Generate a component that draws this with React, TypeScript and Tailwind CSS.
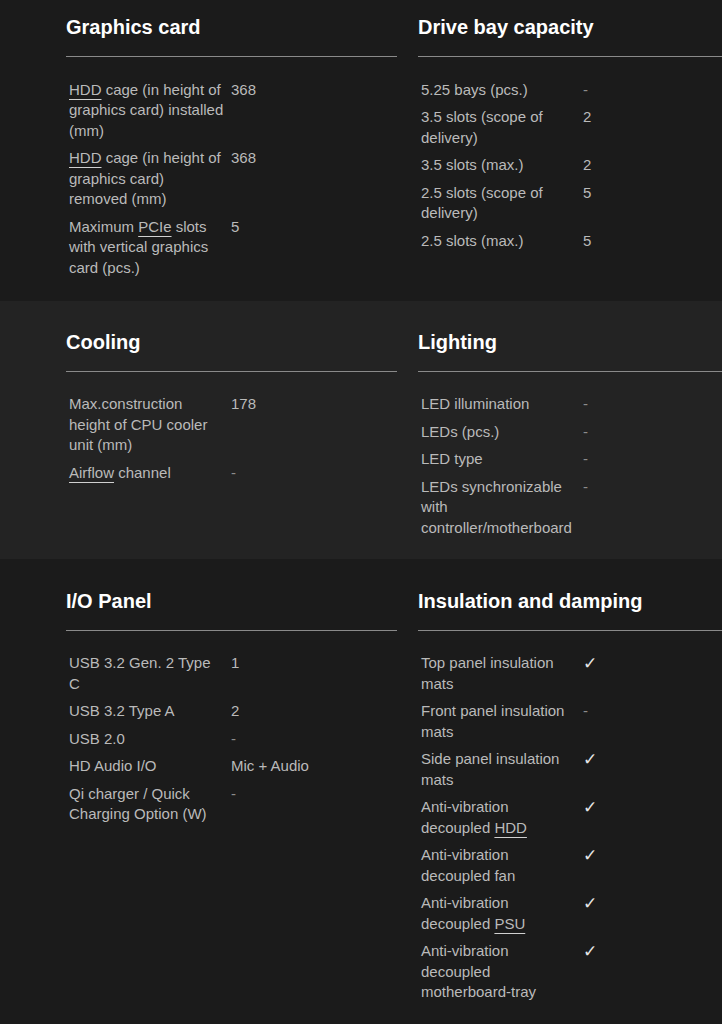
import React from 'react';

type Row = { label: React.ReactNode; value: React.ReactNode };

const U: React.FC<{ children: React.ReactNode }> = ({ children }) => (
  <span className="underline decoration-1 underline-offset-[4px] decoration-[#d0d0d0]">{children}</span>
);

const dash = <span className="text-[#8c8c8c]">-</span>;
const check = (
  <span className="text-[#e6e6e6] text-[17px]" style={{ fontFamily: '"DejaVu Sans", sans-serif' }}>
    ✓
  </span>
);

const SpecBlock: React.FC<{ title: string; rows: Row[] }> = ({ title, rows }) => (
  <div className="min-w-0">
    <h2 className="text-[20px] leading-6 font-bold text-white">{title}</h2>
    <div className="mt-[17px] h-px bg-[#8a8a8a]" />
    <div className="mt-[19px] pl-[3px]">
      {rows.map((r, i) => (
        <div key={i} className="grid grid-cols-[162px_1fr] py-[3.5px] text-[15px] leading-[20.5px] text-[#bababa]">
          <div className="pr-[7px]">{r.label}</div>
          <div>{r.value}</div>
        </div>
      ))}
    </div>
  </div>
);

const Section: React.FC<{ bg: string; pad: string; left: React.ReactNode; right: React.ReactNode }> = ({
  bg,
  pad,
  left,
  right,
}) => (
  <section className={`${bg} ${pad} pl-[66px]`}>
    <div className="grid grid-cols-[331px_1fr] gap-[21px]">
      {left}
      {right}
    </div>
  </section>
);

export default function App() {
  return (
    <div
      className="min-h-screen w-[722px] overflow-hidden bg-[#1b1b1b]"
      style={{ fontFamily: '"Liberation Sans", Arial, sans-serif' }}
    >
      <Section
        bg="bg-[#1b1b1b]"
        pad="pt-[15px] pb-[19px]"
        left={
          <SpecBlock
            title="Graphics card"
            rows={[
              { label: <><U>HDD</U> cage (in height of graphics card) installed (mm)</>, value: '368' },
              { label: <><U>HDD</U> cage (in height of graphics card) removed (mm)</>, value: '368' },
              { label: <>Maximum <U>PCIe</U> slots with vertical graphics card (pcs.)</>, value: '5' },
            ]}
          />
        }
        right={
          <SpecBlock
            title="Drive bay capacity"
            rows={[
              { label: '5.25 bays (pcs.)', value: dash },
              { label: '3.5 slots (scope of delivery)', value: '2' },
              { label: '3.5 slots (max.)', value: '2' },
              { label: '2.5 slots (scope of delivery)', value: '5' },
              { label: '2.5 slots (max.)', value: '5' },
            ]}
          />
        }
      />
      <Section
        bg="bg-[#232323]"
        pad="pt-[29px] pb-[17px]"
        left={
          <SpecBlock
            title="Cooling"
            rows={[
              { label: 'Max.construction height of CPU cooler unit (mm)', value: '178' },
              { label: <><U>Airflow</U> channel</>, value: dash },
            ]}
          />
        }
        right={
          <SpecBlock
            title="Lighting"
            rows={[
              { label: 'LED illumination', value: dash },
              { label: 'LEDs (pcs.)', value: dash },
              { label: 'LED type', value: dash },
              { label: 'LEDs synchronizable with controller/motherboard', value: dash },
            ]}
          />
        }
      />
      <Section
        bg="bg-[#1b1b1b]"
        pad="pt-[30px] pb-[17px]"
        left={
          <SpecBlock
            title="I/O Panel"
            rows={[
              { label: 'USB 3.2 Gen. 2 Type C', value: '1' },
              { label: 'USB 3.2 Type A', value: '2' },
              { label: 'USB 2.0', value: dash },
              { label: 'HD Audio I/O', value: 'Mic + Audio' },
              { label: 'Qi charger / Quick Charging Option (W)', value: dash },
            ]}
          />
        }
        right={
          <SpecBlock
            title="Insulation and damping"
            rows={[
              { label: 'Top panel insulation mats', value: check },
              { label: 'Front panel insulation mats', value: dash },
              { label: 'Side panel insulation mats', value: check },
              { label: <>Anti-vibration decoupled <U>HDD</U></>, value: check },
              { label: 'Anti-vibration decoupled fan', value: check },
              { label: <>Anti-vibration decoupled <U>PSU</U></>, value: check },
              { label: 'Anti-vibration decoupled motherboard-tray', value: check },
            ]}
          />
        }
      />
    </div>
  );
}
